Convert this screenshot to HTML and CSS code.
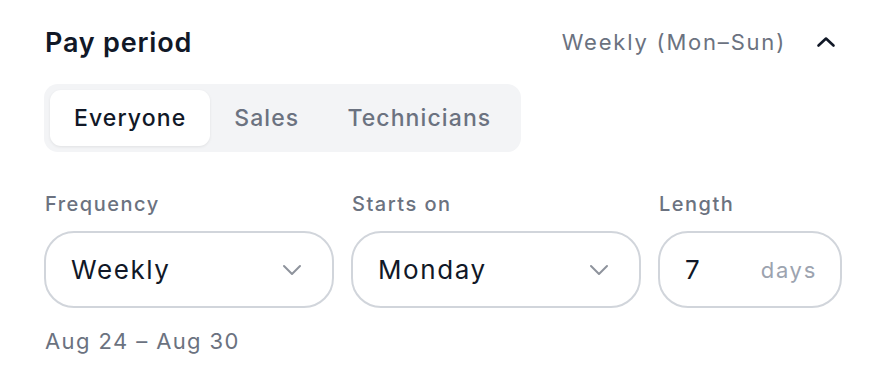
FILE: index.html
```html
<!DOCTYPE html>
<html lang="en">
<head>
  <meta charset="UTF-8">
  <meta name="viewport" content="width=device-width, initial-scale=1.0">
  <title>Pay period</title>
  <link rel="stylesheet" href="styles.css">
</head>
<body>
  <div class="panel">
    <div class="panel-header">
      <h2 class="panel-title">Pay period</h2>
      <div class="panel-summary">
        <span>Weekly (Mon–Sun)</span>
        <svg class="toggle-icon" width="24" height="24" viewBox="0 0 24 24" fill="none" stroke="#111827" stroke-width="2.6" stroke-linecap="round" stroke-linejoin="round"><path d="M4.5 15.5 12 8.5l7.5 7"/></svg>
      </div>
    </div>

    <div class="tabs">
      <button class="tab tab--active">Everyone</button>
      <button class="tab">Sales</button>
      <button class="tab">Technicians</button>
    </div>

    <div class="fields">
      <div class="field">
        <label class="field-label">Frequency</label>
        <div class="select-box">
          <span>Weekly</span>
          <svg width="20" height="12" viewBox="0 0 20 12" fill="none" stroke="#8e939c" stroke-width="2" stroke-linecap="round" stroke-linejoin="round"><path d="M2 2l8 8 8-8"/></svg>
        </div>
      </div>
      <div class="field">
        <label class="field-label">Starts on</label>
        <div class="select-box">
          <span>Monday</span>
          <svg width="20" height="12" viewBox="0 0 20 12" fill="none" stroke="#8e939c" stroke-width="2" stroke-linecap="round" stroke-linejoin="round"><path d="M2 2l8 8 8-8"/></svg>
        </div>
      </div>
      <div class="field">
        <label class="field-label">Length</label>
        <div class="select-box select-box--length">
          <span>7</span>
          <span class="unit">days</span>
        </div>
      </div>
    </div>

    <p class="range-text">Aug 24 – Aug 30</p>
  </div>
</body>
</html>
```

FILE: styles.css
```css
body {
  margin: 0;
  padding: 0;
  background: #fff;
  font-family: Inter, "Noto Sans", sans-serif;
  color: #111827;
}

.panel {
  width: 798px;
  padding: 24px 0 0 44px;
}

.panel-header {
  display: flex;
  justify-content: space-between;
  align-items: center;
  height: 36px;
}

.panel-title {
  margin: 0 0 0 1px;
  font-size: 27px;
  font-weight: 600;
  letter-spacing: 0.8px;
}

.panel-summary {
  display: flex;
  align-items: center;
  gap: 28px;
  font-size: 22px;
  color: #6b7280;
  letter-spacing: 1.8px;
}

.toggle-icon {
  margin-right: 4px;
}

.tabs {
  display: inline-flex;
  margin-top: 24px;
  padding: 6px;
  background: #f3f4f6;
  border-radius: 14px;
}

.tab {
  height: 56px;
  padding: 0 24px;
  border: none;
  background: none;
  border-radius: 11px;
  font-family: inherit;
  font-size: 23px;
  font-weight: 500;
  color: #6b7280;
  letter-spacing: 1.1px;
}

.tab--active {
  background: #fff;
  color: #111827;
  box-shadow: 0 1px 3px rgba(0, 0, 0, 0.08);
}

.fields {
  display: grid;
  grid-template-columns: 290px 290px 184px;
  gap: 17px;
  margin-top: 40px;
}

.field-label {
  display: block;
  margin: 0 0 15px 1px;
  font-size: 20px;
  font-weight: 500;
  color: #6b7280;
  letter-spacing: 1.5px;
}

.select-box {
  display: flex;
  justify-content: space-between;
  align-items: center;
  height: 73px;
  padding: 0 30px 0 25px;
  border: 2px solid #d1d5db;
  border-radius: 30px;
  font-size: 26px;
  letter-spacing: 1.6px;
}

.select-box--length {
  padding: 0 23px 0 25px;
}

.unit {
  font-size: 22px;
  color: #9ca3af;
  letter-spacing: 1.7px;
}

.range-text {
  margin: 20px 0 0 1px;
  font-size: 22px;
  color: #6b7280;
  letter-spacing: 1.4px;
}
```
